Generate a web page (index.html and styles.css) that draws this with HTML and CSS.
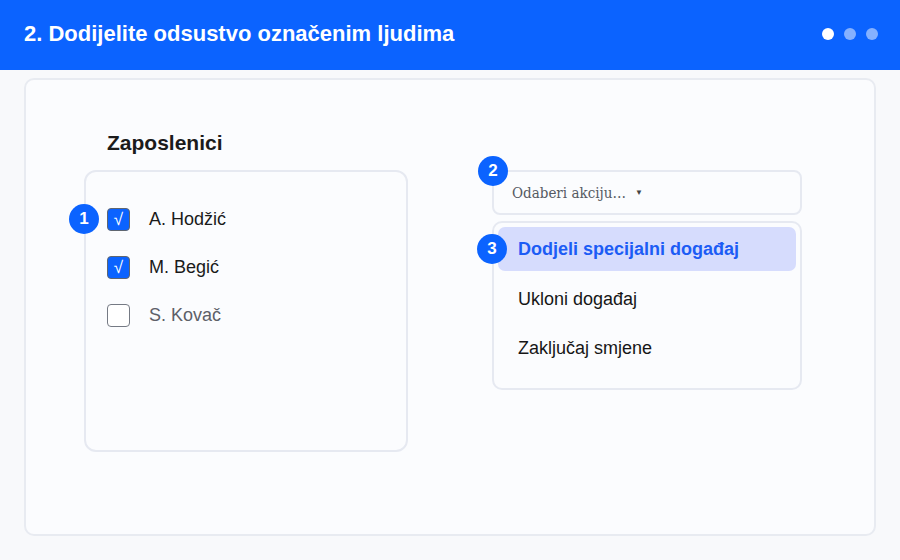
FILE: index.html
```html
<!DOCTYPE html>
<html lang="bs">
<head>
<meta charset="utf-8">
<title>Dodijelite odsustvo</title>
<link rel="stylesheet" href="styles.css">
</head>
<body>
<header class="topbar">
  <h1 class="title">2. Dodijelite odsustvo označenim ljudima</h1>
  <div class="dots">
    <span class="dot dot-active"></span>
    <span class="dot"></span>
    <span class="dot"></span>
  </div>
</header>
<main class="card">
  <div class="layout">
    <h2 class="heading">Zaposlenici</h2>
    <section class="panel">
      <div class="row">
        <span class="badge badge-row">1</span>
        <span class="box box-on">√</span>
        <span class="name">A. Hodžić</span>
      </div>
      <div class="row">
        <span class="box box-on">√</span>
        <span class="name">M. Begić</span>
      </div>
      <div class="row">
        <span class="box"></span>
        <span class="name name-muted">S. Kovač</span>
      </div>
    </section>
    <section class="actions">
      <div class="select">
        <span class="badge badge-select">2</span>
        <span class="select-text">Odaberi akciju…</span>
        <span class="caret">▼</span>
      </div>
      <ul class="menu">
        <li class="item item-active">
          <span class="badge badge-item">3</span>
          Dodjeli specijalni događaj
        </li>
        <li class="item">Ukloni događaj</li>
        <li class="item">Zaključaj smjene</li>
      </ul>
    </section>
  </div>
</main>
</body>
</html>
```

FILE: styles.css
```css
* { box-sizing: border-box; }
html, body { margin: 0; padding: 0; }
body {
  width: 900px;
  height: 560px;
  background: #f8f9fb;
  font-family: "Liberation Sans", Arial, sans-serif;
  color: #1a1a1a;
  overflow: hidden;
}
.topbar {
  height: 70px;
  background: #0b63ff;
  display: flex;
  align-items: center;
  justify-content: space-between;
  padding: 0 22px 2px 24px;
}
.title {
  margin: 0;
  color: #fff;
  font-size: 22px;
  font-weight: 700;
  line-height: 26px;
}
.dots { display: flex; gap: 10px; }
.dot {
  width: 12px;
  height: 12px;
  border-radius: 50%;
  background: rgba(255,255,255,0.5);
}
.dot-active { background: #fff; }
.card {
  margin: 8px 24px 0;
  height: 458px;
  background: #fbfcfe;
  border: 2px solid #e8ebf1;
  border-radius: 10px;
  padding: 50px 0 0 58px;
}
.layout {
  display: grid;
  grid-template-columns: 324px 310px;
  grid-template-rows: auto auto;
  column-gap: 84px;
  row-gap: 14px;
  align-items: start;
}
.heading {
  grid-column: 1;
  grid-row: 1;
  margin: 0 0 0 23px;
  font-size: 21px;
  font-weight: 700;
  line-height: 26px;
  color: #1b1b1b;
}
.panel {
  grid-column: 1;
  grid-row: 2;
  position: relative;
  height: 282px;
  border: 2px solid #e6e9f1;
  border-radius: 12px;
  padding: 23px 0 0 21px;
}
.row {
  position: relative;
  height: 48px;
  display: flex;
  align-items: center;
  gap: 19px;
}
.box {
  width: 23px;
  height: 23px;
  border: 1.5px solid #757a84;
  border-radius: 4px;
  background: #fff;
  display: flex;
  align-items: center;
  justify-content: center;
  color: #fff;
  font-size: 17px;
  line-height: 1;
}
.box-on { background: #0b63ff; border-color: #5f6670; }
.name { font-size: 18px; color: #1a1a1a; }
.name-muted { color: #5d6068; }
.badge {
  position: absolute;
  width: 30px;
  height: 30px;
  border-radius: 50%;
  background: #0b63ff;
  color: #fff;
  font-family: "Liberation Sans", Arial, sans-serif;
  font-size: 17px;
  font-weight: 700;
  display: flex;
  align-items: center;
  justify-content: center;
}
.badge-row { left: -38px; top: 9px; }
.actions {
  grid-column: 2;
  grid-row: 2;
  display: flex;
  flex-direction: column;
  gap: 6px;
}
.select {
  position: relative;
  height: 45px;
  border: 2px solid #e6e9f1;
  border-radius: 8px;
  background: #fbfcfe;
  display: flex;
  align-items: center;
  gap: 9px;
  padding: 0 0 0 18px;
}
.badge-select { left: -16px; top: -16px; }
.select-text {
  font-family: "DejaVu Serif Condensed", "DejaVu Serif", serif;
  font-stretch: condensed;
  font-size: 15px;
  color: #555a62;
}
.caret { font-size: 8px; color: #444; }
.menu {
  list-style: none;
  margin: 0;
  height: 169px;
  border: 2px solid #e6e9f1;
  border-radius: 10px;
  padding: 4px;
  display: flex;
  flex-direction: column;
  gap: 3px;
}
.item {
  position: relative;
  height: 46px;
  display: flex;
  align-items: center;
  padding-left: 20px;
  font-size: 18px;
  color: #161616;
  border-radius: 7px;
}
.item-active {
  height: 44px;
  background: #d6dcfd;
  color: #1c5cf5;
  font-weight: 700;
  margin-bottom: 2px;
}
.badge-item { left: -21px; top: 7px; }
```
